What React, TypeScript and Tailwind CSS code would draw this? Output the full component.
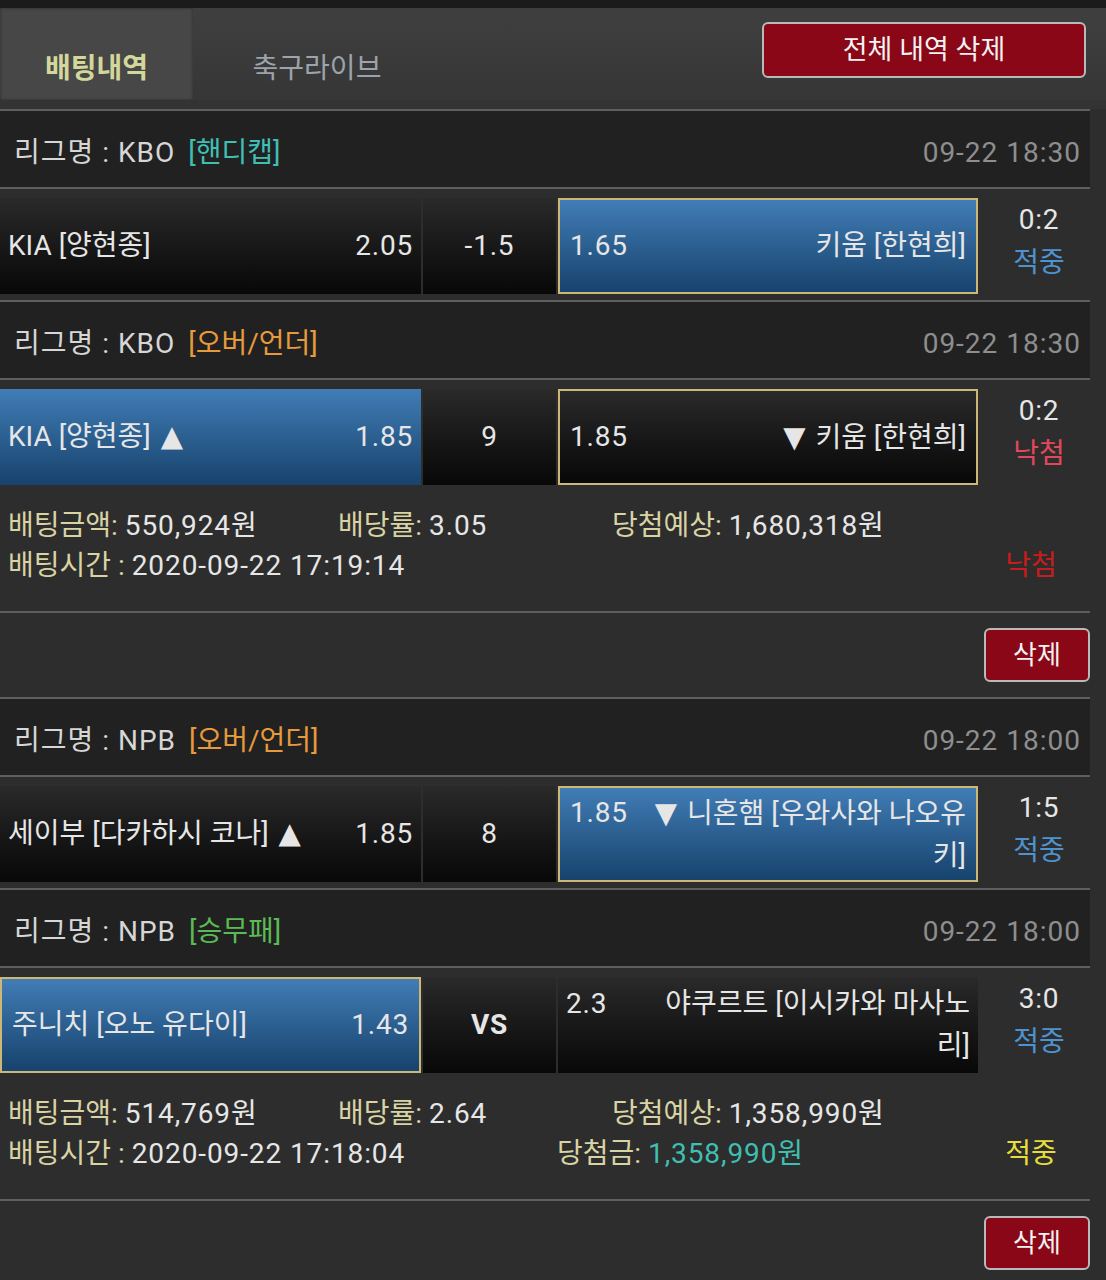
import React from 'react';

type Side = { name: string[]; odds: string; blue?: boolean; picked?: boolean };
type Match = {
  league: string;
  tag: string;
  tagClass: string;
  date: string;
  home: Side;
  mid: string;
  midBold?: boolean;
  away: Side;
  score: string;
  result: string;
  resultClass: string;
};
type Bet = {
  matches: Match[];
  amount: string;
  rate: string;
  expected: string;
  time: string;
  won?: string;
  status: string;
  statusClass: string;
};

const bets: Bet[] = [
  {
    matches: [
      {
        league: '리그명 : KBO',
        tag: '[핸디캡]',
        tagClass: 'text-[#3fbfb3]',
        date: '09-22 18:30',
        home: { name: ['KIA [양현종]'], odds: '2.05' },
        mid: '-1.5',
        away: { name: ['키움 [한현희]'], odds: '1.65', blue: true, picked: true },
        score: '0:2',
        result: '적중',
        resultClass: 'text-[#4d93cf]',
      },
      {
        league: '리그명 : KBO',
        tag: '[오버/언더]',
        tagClass: 'text-[#e79a3c]',
        date: '09-22 18:30',
        home: { name: ['KIA [양현종] ▲'], odds: '1.85', blue: true },
        mid: '9',
        away: { name: ['▼ 키움 [한현희]'], odds: '1.85', picked: true },
        score: '0:2',
        result: '낙첨',
        resultClass: 'text-[#e0485c]',
      },
    ],
    amount: '550,924원',
    rate: '3.05',
    expected: '1,680,318원',
    time: '2020-09-22 17:19:14',
    status: '낙첨',
    statusClass: 'text-[#c91c1c]',
  },
  {
    matches: [
      {
        league: '리그명 : NPB',
        tag: '[오버/언더]',
        tagClass: 'text-[#e79a3c]',
        date: '09-22 18:00',
        home: { name: ['세이부 [다카하시 코나] ▲'], odds: '1.85' },
        mid: '8',
        away: { name: ['▼ 니혼햄 [우와사와 나오유', '키]'], odds: '1.85', blue: true, picked: true },
        score: '1:5',
        result: '적중',
        resultClass: 'text-[#4d93cf]',
      },
      {
        league: '리그명 : NPB',
        tag: '[승무패]',
        tagClass: 'text-[#5cba55]',
        date: '09-22 18:00',
        home: { name: ['주니치 [오노 유다이]'], odds: '1.43', blue: true, picked: true },
        mid: 'VS',
        midBold: true,
        away: { name: ['야쿠르트 [이시카와 마사노', '리]'], odds: '2.3' },
        score: '3:0',
        result: '적중',
        resultClass: 'text-[#4d93cf]',
      },
    ],
    amount: '514,769원',
    rate: '2.64',
    expected: '1,358,990원',
    time: '2020-09-22 17:18:04',
    won: '1,358,990원',
    status: '적중',
    statusClass: 'text-[#e6dc3c]',
  },
];

// triangles come out smaller in the original, DejaVu's glyph is close
function Label({ text }: { text: string }) {
  return (
    <>
      {text.split(/([▲▼])/).map((part, i) =>
        part === '▲' || part === '▼' ? (
          <span key={i} className="px-[3px] font-['DejaVu_Sans'] text-[29px]">
            {part}
          </span>
        ) : (
          <React.Fragment key={i}>{part}</React.Fragment>
        ),
      )}
    </>
  );
}

function cellSkin(side: Side) {
  const bg = side.blue
    ? 'bg-linear-to-b from-[#417db6] to-[#17436d]'
    : 'bg-linear-to-b from-[#2a2a2a] to-[#080808]';
  const border = side.picked ? 'border-2 border-[#cdb776] px-[10px]' : 'px-[8px]';
  return `${bg} ${border}`;
}

function HomeCell({ side }: { side: Side }) {
  return (
    <div className={`flex h-[96px] w-[421px] items-center justify-between ${cellSkin(side)}`}>
      <span className="whitespace-nowrap">
        <Label text={side.name[0]} />
      </span>
      <span className="tracking-[0.8px]">{side.odds}</span>
    </div>
  );
}

function AwayCell({ side }: { side: Side }) {
  return (
    <div className={`ml-[2px] flex h-[96px] w-[420px] items-center ${cellSkin(side)}`}>
      <div className="flex w-full items-start justify-between leading-[42px]">
        <span className="tracking-[0.8px]">{side.odds}</span>
        <div className="text-right">
          {side.name.map((line) => (
            <div key={line} className="whitespace-nowrap">
              <Label text={line} />
            </div>
          ))}
        </div>
      </div>
    </div>
  );
}

function LeagueHeader({ m }: { m: Match }) {
  return (
    <div className="flex h-[80px] items-center justify-between border-y-2 border-[#5e5e5e] bg-[#212121] pl-[14px] pr-[9px] pt-[8px]">
      <div className="text-[#d6d6d6]">
        <span className="tracking-[1px]">{m.league}</span>
        <span className={`ml-[13px] ${m.tagClass}`}>{m.tag}</span>
      </div>
      <div className="tracking-[1px] text-[#8e8e8e]">{m.date}</div>
    </div>
  );
}

function MatchRow({ m }: { m: Match }) {
  return (
    <div className="flex h-[111px] pt-[9px]">
      <HomeCell side={m.home} />
      <div
        className={`ml-[2px] flex h-[96px] w-[133px] items-center justify-center bg-linear-to-b from-[#2a2a2a] to-[#080808] tracking-[0.8px] ${
          m.midBold ? 'font-bold' : ''
        }`}
      >
        {m.mid}
      </div>
      <AwayCell side={m.away} />
      <div className="flex h-[96px] w-[112px] flex-col items-center justify-center pb-[10px] pl-[10px] leading-[41px]">
        <span className="tracking-[0.8px]">{m.score}</span>
        <span className={`mt-[2px] ${m.resultClass}`}>{m.result}</span>
      </div>
    </div>
  );
}

function DeleteButton({ label, className }: { label: string; className: string }) {
  return (
    <button
      className={`flex items-center justify-center rounded-[6px] border-2 border-[#b9b9b9] bg-[#8a0718] text-[#f2f2f2] ${className}`}
    >
      {label}
    </button>
  );
}

function BetBlock({ bet }: { bet: Bet }) {
  return (
    <div>
      {bet.matches.map((m, i) => (
        <div key={i}>
          <LeagueHeader m={m} />
          <MatchRow m={m} />
        </div>
      ))}
      <div className="h-[120px] pl-[8px] pr-[9px] pt-[15px] leading-[40px]">
        <div className="flex">
          <div className="w-[330px]">
            <span className="text-[#d9d3a4]">배팅금액:</span> <span className="tracking-[0.9px]">{bet.amount}</span>
          </div>
          <div className="w-[274px]">
            <span className="text-[#d9d3a4]">배당률:</span> <span className="tracking-[0.9px]">{bet.rate}</span>
          </div>
          <div>
            <span className="text-[#d9d3a4]">당첨예상:</span> <span className="tracking-[0.9px]">{bet.expected}</span>
          </div>
        </div>
        <div className="flex">
          <div className="w-[549px]">
            <span className="text-[#d9d3a4]">배팅시간 :</span> <span className="tracking-[0.9px]">{bet.time}</span>
          </div>
          {bet.won && (
            <div>
              <span className="text-[#d9d3a4]">당첨금:</span>{' '}
              <span className="tracking-[0.9px] text-[#3fbfb3]">{bet.won}</span>
            </div>
          )}
          <div className={`ml-auto w-[100px] text-center ${bet.statusClass}`}>{bet.status}</div>
        </div>
      </div>
      <div className="h-[2px] bg-[#5e5e5e]" />
      <div className="flex h-[84px] items-center justify-end">
        <DeleteButton label="삭제" className="h-[54px] w-[106px] text-[26px]" />
      </div>
    </div>
  );
}

export default function App() {
  return (
    <div className="h-[1280px] w-[1106px] overflow-hidden bg-[#2d2d2d] font-['Roboto','Noto_Sans_CJK_KR',sans-serif] text-[28px] text-[#e6e6e6]">
      <div className="h-[8px] bg-[#1b1b1b]" />
      <div className="flex h-[92px] bg-linear-to-b from-[#3f3f3f] to-[#363636]">
        <div className="flex w-[193px] items-center justify-center bg-[#474747] pt-[30px] text-[28px] font-bold text-[#d4d79b] shadow-[inset_0_0_3px_#2a2a2a]">
          배팅내역
        </div>
        <div className="ml-[2px] flex w-[244px] items-center justify-center pt-[30px] text-[28px] text-[#9ca3ab]">
          축구라이브
        </div>
        <div className="ml-auto mr-[20px] mt-[14px]">
          <DeleteButton label="전체 내역 삭제" className="h-[56px] w-[324px] text-[27px]" />
        </div>
      </div>
      <div className="h-[9px] bg-[#333333]" />
      <div className="w-[1090px]">
        {bets.map((bet, i) => (
          <BetBlock key={i} bet={bet} />
        ))}
      </div>
    </div>
  );
}
